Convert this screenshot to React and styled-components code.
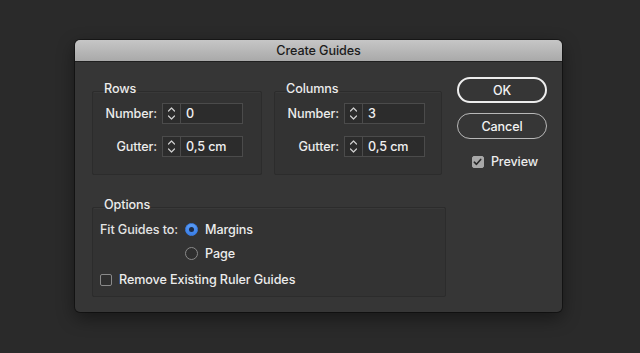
import React from 'react';
import styled, { createGlobalStyle } from 'styled-components';

const GlobalStyle = createGlobalStyle`
  html, body {
    margin: 0;
    background: #2a2a2a;
  }
  body {
    font-family: Inter, "Liberation Sans", sans-serif;
    font-size: 12.6px;
    font-weight: 500;
    letter-spacing: -0.1px;
    color: #e4e4e4;
  }
`;

const Stage = styled.div`
  height: 353px;
  box-sizing: border-box;
  padding: 40px 0 0 75px;
`;

const Dialog = styled.div`
  width: 487px;
  height: 272px;
  background: #363636;
  border-radius: 5px;
  box-shadow: 0 6px 18px rgba(0, 0, 0, 0.45), 0 0 0 1px rgba(0, 0, 0, 0.4);
  overflow: hidden;
  display: flex;
  flex-direction: column;
`;

const TitleBar = styled.div`
  height: 21px;
  line-height: 21px;
  text-align: center;
  color: #1c1c1c;
  background: linear-gradient(#c6c6c6, #a9a9a9);
  border-bottom: 1px solid #1f1f1f;
`;

const Body = styled.div`
  flex: 1;
  display: flex;
  padding: 0 15px 14px 17px;
`;

const LeftCol = styled.div`
  width: 354px;
  padding-top: 20px;
  display: flex;
  flex-direction: column;
`;

const TopRow = styled.div`
  display: flex;
  gap: 12px;
`;

const Group = styled.div`
  width: ${p => p.$width}px;
  display: flex;
  flex-direction: column;
  margin-top: ${p => p.$top || 0}px;
`;

const Legend = styled.div`
  height: 14px;
  line-height: 14px;
  padding-left: 12px;
  margin-bottom: -5px;
  position: relative;
  z-index: 1;
  color: #ececec;
`;

const Box = styled.div`
  border: 1px solid #2c2c2c;
  border-radius: 2px;
  background: #333333;
  box-shadow: inset 0 1px 0 rgba(255, 255, 255, 0.03);
  padding: ${p => p.$pad};
`;

const FieldRow = styled.div`
  display: flex;
  align-items: center;
  gap: 5px;
  & + & {
    margin-top: 12px;
  }
`;

const Label = styled.div`
  width: ${p => p.$width || 64}px;
  text-align: right;
  color: #ececec;
`;

const Field = styled.div`
  display: flex;
  width: 81px;
  height: 21px;
  box-sizing: border-box;
  border: 1px solid #4b4b4b;
  background: #2c2c2c;
`;

const Stepper = styled.div`
  width: 17px;
  border-right: 1px solid #4b4b4b;
  display: flex;
  align-items: center;
  justify-content: center;
`;

const Value = styled.div`
  flex: 1;
  padding-left: 5px;
  line-height: 19px;
  color: #f0f0f0;
`;

const OptionsGrid = styled.div`
  display: grid;
  grid-template-columns: 85px 1fr;
  grid-template-rows: 18px 18px 18px;
  row-gap: 6px;
  align-items: center;
  & > :last-child {
    grid-column: 1 / span 2;
    margin-top: 5px;
  }
`;

const Choice = styled.label`
  display: flex;
  align-items: center;
  gap: ${p => p.$gap || 7}px;
  color: #ececec;
`;

const Radio = styled.span`
  width: 13px;
  height: 13px;
  box-sizing: border-box;
  border-radius: 50%;
  display: flex;
  align-items: center;
  justify-content: center;
  background: ${p => (p.$on ? 'linear-gradient(#5a9cf5, #3a7ee6)' : '#2f2f2f')};
  border: 1px solid ${p => (p.$on ? '#3a7ee6' : '#8a8a8a')};
  &::after {
    content: '';
    display: ${p => (p.$on ? 'block' : 'none')};
    width: 5px;
    height: 5px;
    border-radius: 50%;
    background: #1d2b45;
  }
`;

const Check = styled.span`
  width: 12px;
  height: 12px;
  box-sizing: border-box;
  border-radius: 2px;
  display: flex;
  align-items: center;
  justify-content: center;
  background: ${p => (p.$on ? '#a8a8a8' : '#2f2f2f')};
  border: 1px solid ${p => (p.$on ? '#a8a8a8' : '#8a8a8a')};
`;

const RightCol = styled.div`
  width: 90px;
  margin-left: 11px;
  padding-top: 15px;
  display: flex;
  flex-direction: column;
  align-items: center;
`;

const Button = styled.button`
  width: 90px;
  height: 26px;
  box-sizing: border-box;
  border-radius: 13px;
  background: #363636;
  color: #f2f2f2;
  font: inherit;
  letter-spacing: inherit;
  padding: 0;
  border: ${p => (p.$primary ? '2px solid #ededed' : '1px solid #b8b8b8')};
  & + & {
    margin-top: 10px;
  }
`;

const PreviewRow = styled.div`
  margin-top: 15px;
  margin-left: 6px;
`;

const StepIcon = () => (
  <svg width="9" height="15" viewBox="0 0 9 15" fill="none" stroke="#cfcfcf" strokeWidth="1.2" strokeLinecap="round" strokeLinejoin="round">
    <path d="M1.5 5 L4.5 2 L7.5 5" />
    <path d="M1.5 10 L4.5 13 L7.5 10" />
  </svg>
);

const Tick = () => (
  <svg width="9" height="8" viewBox="0 0 9 8" fill="none" stroke="#2a2a2a" strokeWidth="1.6" strokeLinecap="round" strokeLinejoin="round">
    <path d="M1.3 4.2 L3.5 6.3 L7.7 1.4" />
  </svg>
);

function NumberField({ label, value }) {
  return (
    <FieldRow>
      <Label>{label}</Label>
      <Field>
        <Stepper><StepIcon /></Stepper>
        <Value>{value}</Value>
      </Field>
    </FieldRow>
  );
}

function GuideGroup({ title, width, number }) {
  return (
    <Group $width={width}>
      <Legend>{title}</Legend>
      <Box $pad="11px 0 17px 0">
        <NumberField label="Number:" value={number} />
        <NumberField label="Gutter:" value="0,5 cm" />
      </Box>
    </Group>
  );
}

export default function App() {
  return (
    <>
      <GlobalStyle />
      <Stage>
        <Dialog>
          <TitleBar>Create Guides</TitleBar>
          <Body>
            <LeftCol>
              <TopRow>
                <GuideGroup title="Rows" width={170} number="0" />
                <GuideGroup title="Columns" width={168} number="3" />
              </TopRow>
              <Group $width={354} $top={23}>
                <Legend>Options</Legend>
                <Box $pad="12px 0 10px 7px">
                  <OptionsGrid>
                    <span>Fit Guides to:</span>
                    <Choice><Radio $on />Margins</Choice>
                    <span />
                    <Choice><Radio />Page</Choice>
                    <Choice $gap={7}><Check />Remove Existing Ruler Guides</Choice>
                  </OptionsGrid>
                </Box>
              </Group>
            </LeftCol>
            <RightCol>
              <Button $primary>OK</Button>
              <Button>Cancel</Button>
              <PreviewRow>
                <Choice $gap={7}><Check $on><Tick /></Check>Preview</Choice>
              </PreviewRow>
            </RightCol>
          </Body>
        </Dialog>
      </Stage>
    </>
  );
}
